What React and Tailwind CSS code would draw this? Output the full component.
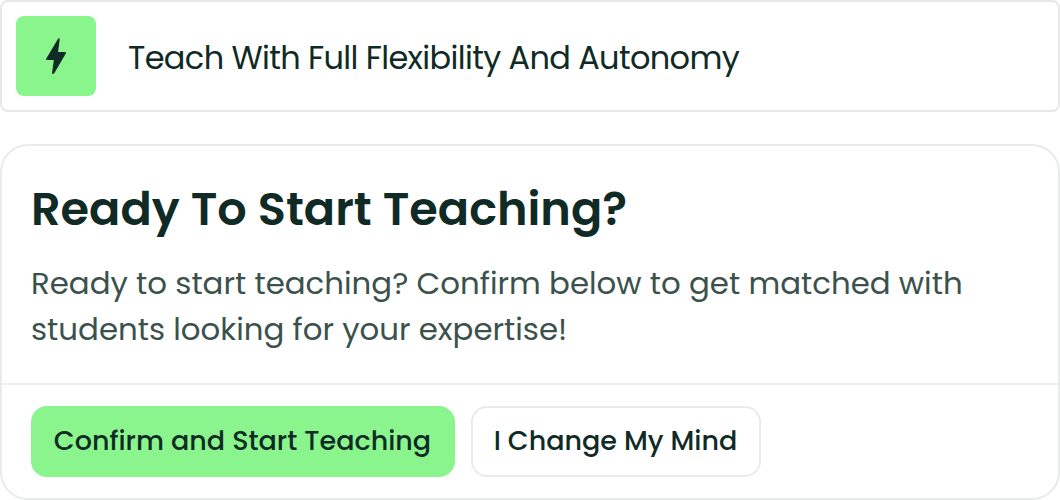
import React from 'react';

const Button = ({ className, children }) => (
  <button className={`h-[71px] pr-px rounded-2xl text-[27px] font-medium whitespace-nowrap ${className}`}>
    {children}
  </button>
);

const App = () => {
  return (
    <div className="flex flex-col gap-8 w-[1060px] h-[500px] overflow-hidden bg-white text-[#102b25] font-['Poppins','Inter',sans-serif]">

      {/* Perk */}
      <div className="flex items-center shrink-0 h-28 pl-3.5 border-2 border-[#e8e8e8] rounded-lg">
        <div className="flex items-center justify-center size-20 bg-[#8af58c] rounded-lg">
          <svg width="20" height="36" viewBox="0 0 20 36" fill="currentColor">
            <path d="M12.2 .5 Q13.8 -.5 13.7 1.2 L12.1 14 H19 Q20.6 14 19.8 15.5 L8.4 35 Q7.6 36.2 6.4 35.8 Q6 35.5 6.1 34.7 L7.8 22 H.9 Q-.4 22 .3 20.5 Z" />
          </svg>
        </div>
        <span className="ml-8 pt-1 text-[32px] leading-[48px] tracking-[-0.64px] whitespace-nowrap">
          Teach With Full Flexibility And Autonomy
        </span>
      </div>

      {/* Confirmation card */}
      <div className="flex flex-col shrink-0 h-[356px] border-2 border-[#e8ebea] rounded-[28px]">
        <div className="h-[237px] pt-[29px] pl-[29px]">
          <h2 className="text-[46.2px] leading-[68px] font-semibold whitespace-nowrap">Ready To Start Teaching?</h2>
          <p className="mt-[18px] text-[30.83px] leading-[46px] text-[#3b524c] whitespace-nowrap">
            Ready to start teaching? Confirm below to get matched with
            <br />
            students looking for your expertise!
          </p>
        </div>

        <div className="flex flex-1 gap-4 pt-[21px] pl-[29px] border-t-2 border-[#f0f0f0]">
          <Button className="w-[424px] bg-[#8af58c]">Confirm and Start Teaching</Button>
          <Button className="w-[290px] border-2 border-[#e8ebea] bg-white">I Change My Mind</Button>
        </div>
      </div>

    </div>
  );
};

export default App;
